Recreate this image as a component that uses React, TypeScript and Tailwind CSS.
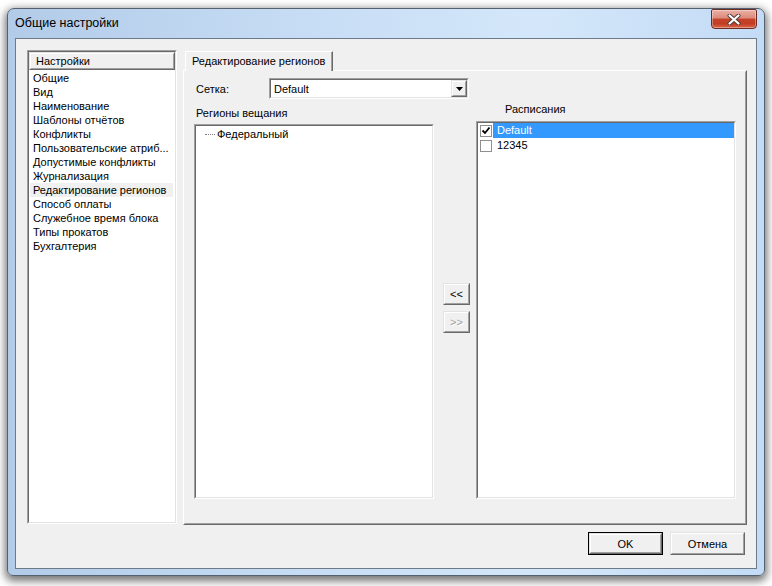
import React from "react";

type BoxProps = { className?: string; innerClassName?: string; children?: React.ReactNode };

const Sunken = ({ className = "", innerClassName = "", children }: BoxProps) => (
  <div className={`border border-t-[#a0a0a0] border-l-[#a0a0a0] border-b-white border-r-white ${className}`}>
    <div className={`w-full h-full border border-t-[#696969] border-l-[#696969] border-b-[#e3e3e3] border-r-[#e3e3e3] ${innerClassName}`}>
      {children}
    </div>
  </div>
);

const Raised = ({ className = "", innerClassName = "", children }: BoxProps) => (
  <div className={`border border-t-[#e3e3e3] border-l-[#e3e3e3] border-b-[#696969] border-r-[#696969] bg-[#f0f0f0] ${className}`}>
    <div className={`w-full h-full border border-t-white border-l-white border-b-[#a0a0a0] border-r-[#a0a0a0] flex items-center ${innerClassName}`}>
      {children}
    </div>
  </div>
);

const settings = [
  "Общие",
  "Вид",
  "Наименование",
  "Шаблоны отчётов",
  "Конфликты",
  "Пользовательские атриб...",
  "Допустимые конфликты",
  "Журнализация",
  "Редактирование регионов",
  "Способ оплаты",
  "Служебное время блока",
  "Типы прокатов",
  "Бухгалтерия",
];

const CloseButton = () => (
  <div className="w-[46px] h-[20px] rounded-b-[4px] rounded-t-[2px] border border-[#6b2b22] bg-[linear-gradient(180deg,#eab1a5_0%,#dc8a7a_45%,#c4432b_50%,#c23c22_75%,#d9664a_100%)] shadow-[inset_0_0_0_1px_rgba(255,255,255,0.35)] flex items-center justify-center">
    <svg width="14" height="11" viewBox="0 0 14 11">
      <path d="M2.5 1.5 L11.5 9.5 M11.5 1.5 L2.5 9.5" stroke="#4a3a38" strokeWidth="4" strokeLinecap="round" />
      <path d="M2.5 1.5 L11.5 9.5 M11.5 1.5 L2.5 9.5" stroke="#ffffff" strokeWidth="2.2" strokeLinecap="round" />
    </svg>
  </div>
);

const Checkbox = ({ checked }: { checked?: boolean }) => (
  <div className="w-[12px] h-[12px] border border-[#8f8f8f] bg-white shrink-0 flex items-center justify-center">
    {checked && (
      <svg width="10" height="10" viewBox="0 0 10 10">
        <path d="M1.5 4.5 L4 7 L8.5 1.5" stroke="#000" strokeWidth="1.8" fill="none" />
      </svg>
    )}
  </div>
);

export default function App() {
  return (
    <div className="w-[772px] h-[586px] bg-white pt-[8px] pl-[7px] font-['Liberation_Sans',Arial,sans-serif] text-black text-[11px] overflow-hidden">
      <div className="w-[758px] h-[568px] rounded-t-[7px] rounded-b-[6px] border border-[#55616f] bg-[linear-gradient(90deg,#b2cbe8_0%,#c7ddf5_40%,#d4e7fa_70%,#c3dbf5_100%)] shadow-[0_3px_9px_2px_rgba(0,0,0,0.55)] flex flex-col px-[7px] pb-[6px]">
        {/* title bar */}
        <div className="h-[29px] flex items-start justify-between shrink-0">
          <div className="pt-[7px] text-[12.5px] leading-[15px] text-black">Общие настройки</div>
          <CloseButton />
        </div>
        {/* client */}
        <div className="flex-1 bg-[#f0f0f0] border border-[#6d7a89] flex flex-col">
          <div className="flex pt-[11px] pl-[11px] gap-[6px]">
            {/* settings list */}
            <Sunken className="w-[150px] h-[474px]" innerClassName="bg-white flex flex-col">
              <Raised className="h-[18px] w-full shrink-0" innerClassName="pl-[5px] leading-[14px]">
                Настройки
              </Raised>
              <div className="flex flex-col pt-[1px]">
                {settings.map((s) => (
                  <div
                    key={s}
                    className={`h-[14px] leading-[14px] ml-[1px] mr-[2px] pl-[3px] whitespace-nowrap overflow-hidden ${
                      s === "Редактирование регионов" ? "bg-[#f0f0f0]" : ""
                    }`}
                  >
                    {s}
                  </div>
                ))}
              </div>
            </Sunken>

            {/* tab control */}
            <div className="w-[564px] flex flex-col pt-[1px]">
              <div className="ml-[2px] w-[148px] h-[20px] -mb-[1px] relative z-10 bg-[#f0f0f0] border-t border-l border-t-white border-l-white border-r border-r-[#696969]">
                <div className="h-full border-r border-r-[#a0a0a0] pl-[6px] pt-[2px] leading-[14px]">
                  Редактирование регионов
                </div>
              </div>
              <div className="h-[455px] border border-t-white border-l-white border-b-[#696969] border-r-[#696969]">
                <div className="w-full h-full border border-t-[#f0f0f0] border-l-[#f0f0f0] border-b-[#a0a0a0] border-r-[#a0a0a0] flex flex-col">
                  {/* Сетка row */}
                  <div className="flex items-center pt-[6px] pl-[11px]">
                    <div className="w-[73px] leading-[14px]">Сетка:</div>
                    <Sunken className="w-[200px] h-[21px]" innerClassName="bg-white flex items-center">
                      <div className="flex-1 pl-[3px] leading-[14px]">Default</div>
                      <Raised className="w-[16px] h-full shrink-0" innerClassName="justify-center">
                        <svg width="7" height="4" viewBox="0 0 7 4">
                          <path d="M0 0 H7 L3.5 4 Z" fill="#000" />
                        </svg>
                      </Raised>
                    </Sunken>
                  </div>
                  {/* lists row */}
                  <div className="flex items-end mt-[3px] pl-[9px]">
                    <div className="w-[240px] flex flex-col">
                      <div className="h-[14px] leading-[14px] pl-[2px] mb-[4px]">Регионы вещания</div>
                      <Sunken className="h-[375px]" innerClassName="bg-white">
                        <div className="h-[16px] flex items-center">
                          <div className="ml-[9px] w-[10px] border-t border-dotted border-[#808080]" />
                          <div className="ml-[2px] leading-[14px]">Федеральный</div>
                        </div>
                      </Sunken>
                    </div>
                    <div className="self-start pt-[181px] ml-[9px] w-[27px] flex flex-col gap-[6px]">
                      <Raised className="h-[22px]" innerClassName="justify-center leading-[14px]">
                        {"<<"}
                      </Raised>
                      <Raised className="h-[22px]" innerClassName="justify-center leading-[14px] text-[#a0a0a0] [text-shadow:1px_1px_0_#ffffff]">
                        {">>"}
                      </Raised>
                    </div>
                    <div className="ml-[6px] w-[260px] flex flex-col">
                      <div className="h-[14px] leading-[14px] pl-[29px] mb-[5px]">Расписания</div>
                      <Sunken className="h-[378px]" innerClassName="bg-white flex flex-col">
                        <div className="h-[15px] flex items-center">
                          <div className="ml-[2px]">
                            <Checkbox checked />
                          </div>
                          <div className="ml-[1px] flex-1 h-full bg-[#3399ff] text-white pl-[4px] leading-[15px]">Default</div>
                        </div>
                        <div className="h-[15px] flex items-center">
                          <div className="ml-[2px]">
                            <Checkbox />
                          </div>
                          <div className="ml-[1px] flex-1 h-full pl-[4px] leading-[15px]">12345</div>
                        </div>
                      </Sunken>
                    </div>
                  </div>
                </div>
              </div>
            </div>
          </div>

          {/* buttons */}
          <div className="flex justify-end gap-[7px] pr-[11px] mt-[7px]">
            <div className="w-[75px] h-[23px] border border-black">
              <Raised className="w-full h-full" innerClassName="justify-center leading-[14px]">
                OK
              </Raised>
            </div>
            <Raised className="w-[75px] h-[23px]" innerClassName="justify-center leading-[14px]">
              Отмена
            </Raised>
          </div>
        </div>
      </div>
    </div>
  );
}
